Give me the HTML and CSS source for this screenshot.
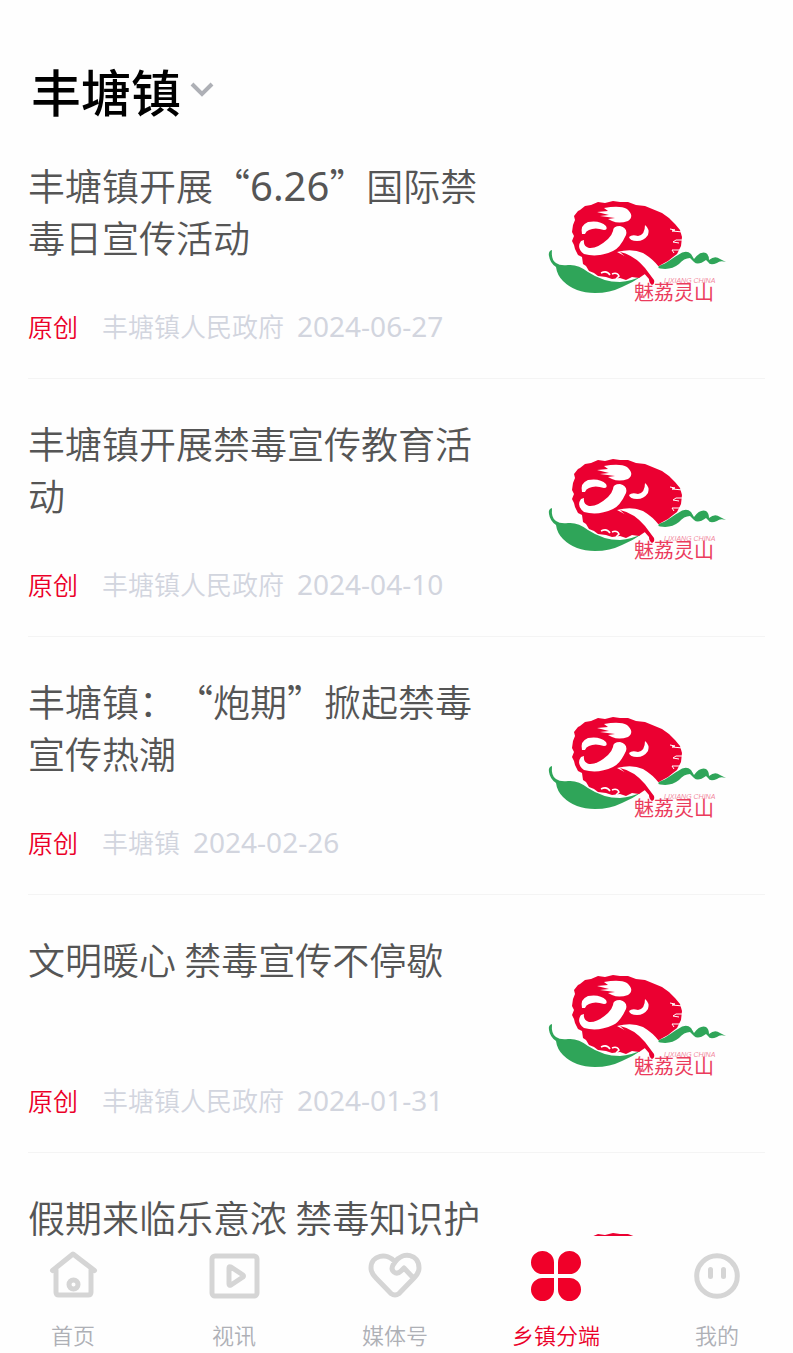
FILE: index.html
```
<!DOCTYPE html>
<html lang="zh-CN">
<head>
  <meta charset="UTF-8">
  <meta name="viewport" content="width=device-width, initial-scale=1.0">
  <title>丰塘镇</title>
  <link rel="stylesheet" href="styles.css">
</head>
<body>
  <!-- shared logo used by every thumbnail -->
  <svg class="defs" width="0" height="0" aria-hidden="true">
    <symbol id="logo" viewBox="-20 -30 245 186">
      <path fill="#2fa559" d="M12 61Q8 62 9 67Q10 74 16 78Q17 86 23 92Q35 104 55 104Q70 104 82 98Q92 94 102 87Q92 92 80 93Q63 93 48 83Q38 75 28 76Q20 77 16 74Q11 71 12 61Z"/>
      <path fill="#2fa559" d="M115 78C125 76 131 70 138 66Q146 60 151 65L154 70Q160 62 166 64Q169 66 169 71Q175 66 180 70L186 73Q180 71 177 74Q170 77 168 73L166 71Q158 77 154 73L150 69Q144 69 139 75Q129 83 115 78Z"/>
      <path fill="#eb0031" d="M38 22L40 21L45 17L51 16L58 13L65 14L73 12L80 13L88 13L96 16L105 17L122 24L129 29L135 35L140 41L142 48L141 57L137 65L133 68L128 72L117 78L112 84L105 85L99 89L92 88L86 91L80 89L72 90L66 88L58 87L54 84L49 82L46 77L43 75L42 68L38 66L35 60L34 56L32 52L34 47L32 43L33 36L35 31L34 27Z"/>
      <path fill="none" stroke="#fff" d="M130 40l5 1-3 1 11 1M143 51l-7 0-3 2 6 1M140 61l-8 0 2 3"/>
      <path fill="#fff" d="M57 23L68 22L64 19Q80 16 87 20Q95 27 88 32Q79 35 72 32L68 30L75 29L60 27L69 26Z"/>
      <path fill="#fff" d="M42 45Q40 36 48 33Q60 31 66 37Q68 41 64 41Q55 38 49 41Q46 42 45 45Z"/>
      <path fill="#fff" d="M73 42Q73 37 80 37Q88 39 86 46Q80 59 73 62Q58 69 44 65Q36 59 41 52L44 51Q43 57 49 59Q57 60 68 50Q72 46 73 42Z"/>
      <path fill="#fff" d="M105 36Q110 40 108 46Q104 52 97 52Q90 52 89 48Q92 45 98 47Q105 46 105 36Z"/>
      <path fill="#fff" d="M77 63Q92 59 103 64Q113 70 119 78L112 85L108 85L100 75Z"/>
      <path fill="#eb0031" d="M80 63Q94 66 105 79L114 91Q115 95 112 96Q109 94 109 90Q101 80 92 74Z"/>
      <path fill="none" stroke="#fff" stroke-width="1.500" d="M61 84Q67 81 70 86M72 85Q77 83 79 87L76 90"/>
      <text class="logo-en" x="124" y="94">LIXIANG CHINA</text>
      <text class="logo-name" x="94" y="111">魅荔灵山</text>
    </symbol>
  </svg>

  <div class="app">
    <header class="header">
      <h1>
        <button class="town" type="button">
          <span>丰塘镇</span>
          <svg class="arrow" viewBox="0 0 24 24" aria-hidden="true"><path d="M2 8l10 10 10-10"/></svg>
        </button>
      </h1>
    </header>

    <main class="news">
      <a class="item" href="#">
        <div class="info">
          <h2>丰塘镇开展“<span class="num">6.26</span>”国际禁毒日宣传活动</h2>
          <p class="meta"><span class="tag">原创</span><span>丰塘镇人民政府</span><time>2024-06-27</time></p>
        </div>
        <svg class="thumb" role="img" aria-label="魅荔灵山"><use href="#logo"/></svg>
      </a>
      <a class="item" href="#">
        <div class="info">
          <h2>丰塘镇开展禁毒宣传教育活动</h2>
          <p class="meta"><span class="tag">原创</span><span>丰塘镇人民政府</span><time>2024-04-10</time></p>
        </div>
        <svg class="thumb" role="img" aria-label="魅荔灵山"><use href="#logo"/></svg>
      </a>
      <a class="item" href="#">
        <div class="info">
          <h2>丰塘镇：“炮期”掀起禁毒宣传热潮</h2>
          <p class="meta"><span class="tag">原创</span><span>丰塘镇</span><time>2024-02-26</time></p>
        </div>
        <svg class="thumb" role="img" aria-label="魅荔灵山"><use href="#logo"/></svg>
      </a>
      <a class="item" href="#">
        <div class="info">
          <h2>文明暖心 禁毒宣传不停歇</h2>
          <p class="meta"><span class="tag">原创</span><span>丰塘镇人民政府</span><time>2024-01-31</time></p>
        </div>
        <svg class="thumb" role="img" aria-label="魅荔灵山"><use href="#logo"/></svg>
      </a>
      <a class="item" href="#">
        <div class="info">
          <h2>假期来临乐意浓 禁毒知识护</h2>
        </div>
        <svg class="thumb" role="img" aria-label="魅荔灵山"><use href="#logo"/></svg>
      </a>
    </main>

    <nav class="tabs">
      <a class="tab" href="#">
        <svg viewBox="0 0 56 56" aria-hidden="true">
          <path d="M7.500 22.500L28 6l21.500 16.500M11 22v22q0 3 3 3h29q3 0 3-3V22"/>
          <circle cx="28.500" cy="36.500" r="4.500"/>
        </svg>
        首页
      </a>
      <a class="tab" href="#">
        <svg viewBox="0 0 56 56" aria-hidden="true">
          <rect x="6" y="8" width="45" height="40" rx="3"/>
          <path d="M23 20v16q0 2 2 1l12-8q1-1 0-2l-12-8q-2-1-2 1z"/>
        </svg>
        视讯
      </a>
      <a class="tab" href="#">
        <svg viewBox="0 0 56 56" aria-hidden="true">
          <path d="M28 14C20 4 4 7 4 20c0 4 2 7 5 10l15 15.500q4 3 8 0L47 30c3-3 5-6 5-10C52 6 36 3 28 14l-2 3c-3 6 3 11 8 6l3-3 7.500 8"/>
        </svg>
        媒体号
      </a>
      <a class="tab active" href="#" aria-current="page">
        <svg viewBox="0 0 56 56" aria-hidden="true">
          <path d="M26 26H14.500A11.500 11.500 0 1 1 26 14.500zM30 26V14.500A11.500 11.500 0 1 1 41.500 26zM26 30v11.500A11.500 11.500 0 1 1 14.500 30zM30 30h11.500A11.500 11.500 0 1 1 30 41.500z"/>
        </svg>
        乡镇分端
      </a>
      <a class="tab" href="#">
        <svg viewBox="0 0 56 56" aria-hidden="true">
          <circle cx="28" cy="28" r="20.300"/>
          <path d="M21.500 21.500v7M34.500 21.500v7"/>
        </svg>
        我的
      </a>
    </nav>
  </div>
</body>
</html>
```
FILE: styles.css
```
* {
  box-sizing: border-box;
}
body {
  margin: 0;
  background: #fefefe;
  color: #555;
  font-family: "Noto Sans CJK SC", sans-serif;
  font-weight: 350;
  text-spacing-trim: space-all;
}
a {
  color: inherit;
  text-decoration: none;
}
.defs {
  position: absolute;
}
.app {
  display: flex;
  flex-direction: column;
  height: 100vh;
}

/* header */
.header {
  flex: none;
  padding: 52px 31px 0;
}
h1 {
  height: 69px;
  margin: 0;
}
.town {
  display: flex;
  align-items: center;
  gap: 9px;
  padding: 0;
  border: none;
  background: none;
  color: #000;
  font: 500 50px/76px "Noto Sans CJK SC", sans-serif;
  cursor: pointer;
}
.arrow {
  width: 24px;
  height: 24px;
  margin-bottom: 4px;
  fill: none;
  stroke: #aeb0b6;
  stroke-width: 4;
}

/* news list */
.news {
  flex: 1;
  min-height: 0;
  padding: 0 28px;
  overflow-y: auto;
  scrollbar-width: none;
}
.item {
  display: flex;
  gap: 22px;
  padding: 38px 0 33px;
  border-bottom: 1px solid #f4f4f4;
}
.info {
  flex: 1;
  min-width: 0;
}
h2 {
  min-height: 104px;
  margin: 0 0 44px;
  font-size: 37px;
  font-weight: 350;
  line-height: 52px;
}
.num {
  font-family: "Noto Sans", sans-serif;
  font-size: 40px;
  font-weight: 400;
  line-height: 40px;
}
.meta {
  display: flex;
  align-items: center;
  margin: 0;
  color: #d2d5de;
  font-size: 26px;
  line-height: 38px;
}
.tag {
  margin-right: 24px;
  color: #eb0029;
  font-size: 25px;
}
time {
  margin-left: 13px;
  font-family: "Noto Sans", sans-serif;
  font-size: 28px;
  font-weight: 400;
  line-height: 36px;
}
.thumb {
  flex: none;
  width: 245px;
  height: 186px;
}
.logo-en {
  fill: #f28a9f;
  font: italic 7px "Liberation Sans", sans-serif;
}
.logo-name {
  fill: #eb3b5c;
  font: 400 20px "Noto Sans CJK SC", sans-serif;
}

/* bottom tabs */
.tabs {
  display: flex;
  flex: none;
  justify-content: space-between;
  padding: 12px 31px 0 28px;
  height: 117px;
}
.tab {
  display: flex;
  flex-direction: column;
  align-items: center;
  gap: 14px;
  width: 90px;
  color: #aeb0b6;
  font-size: 22px;
  line-height: 32px;
  white-space: nowrap;
}
.tab svg {
  width: 56px;
  height: 56px;
  fill: none;
  stroke: #d5d5d5;
  stroke-width: 5;
  stroke-linecap: round;
  stroke-linejoin: round;
}
.active {
  color: #eb0029;
}
.active svg {
  fill: #f00029;
  stroke: none;
}
```
